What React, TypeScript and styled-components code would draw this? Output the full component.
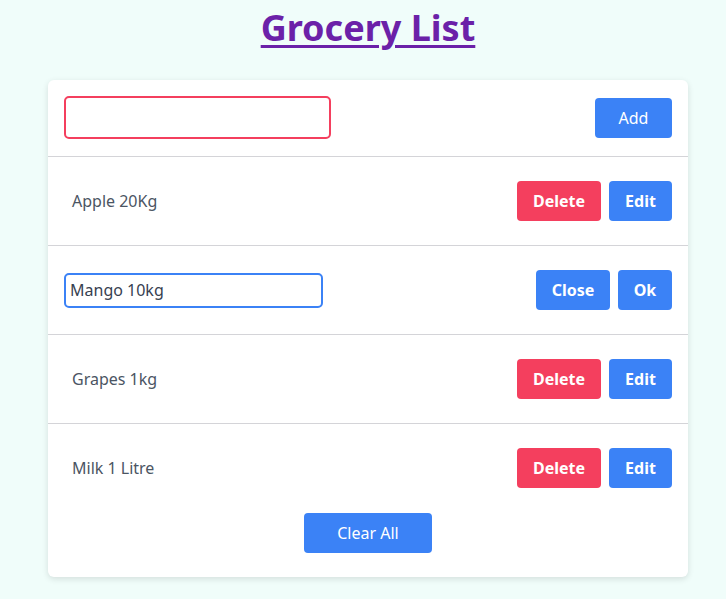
import React from "react";
import styled, { createGlobalStyle } from "styled-components";

const Global = createGlobalStyle`
  html, body { margin: 0; padding: 0; background: #f0fdfa; }
  body { font-family: "Noto Sans", "Open Sans", sans-serif; }
  * { box-sizing: border-box; }
`;

const Page = styled.main`
  display: flex;
  flex-direction: column;
  align-items: center;
  padding: 0 0 22px 10px;
  min-height: 599px;
`;

const Title = styled.h1`
  margin: 4px 0 28px;
  font-size: 36px;
  line-height: 48px;
  font-weight: 700;
  color: #6b21a8;
  text-decoration: underline;
  text-decoration-thickness: 3px;
  text-underline-offset: 4px;
`;

const Card = styled.section`
  width: 640px;
  background: #fff;
  border-radius: 6px;
  box-shadow: 0 2px 6px rgba(0, 0, 0, 0.12);
  display: flex;
  flex-direction: column;
  padding-bottom: 24px;
`;

const Row = styled.div<{ $pad: number; $last?: boolean }>`
  display: flex;
  align-items: center;
  justify-content: space-between;
  padding: ${(p) => p.$pad}px 16px;
  border-bottom: ${(p) => (p.$last ? "none" : "1px solid #d4d4d8")};
`;

const TopRow = styled(Row)`
  padding-bottom: 17px;
`;

const TextInput = styled.input<{ $w: number; $h: number; $color: string }>`
  width: ${(p) => p.$w}px;
  height: ${(p) => p.$h}px;
  border: 2px solid ${(p) => p.$color};
  border-radius: 5px;
  font-family: inherit;
  font-size: 16px;
  color: #374151;
  padding: 0 4px;
  outline: none;
`;

const ItemText = styled.span`
  padding-left: 8px;
  font-size: 16px;
  color: #4b5563;
`;

const Actions = styled.div`
  display: flex;
  gap: 8px;
`;

const Button = styled.button<{ $variant?: "red" | "blue"; $w: number; $bold?: boolean }>`
  width: ${(p) => p.$w}px;
  height: 40px;
  border: none;
  border-radius: 4px;
  background: ${(p) => (p.$variant === "red" ? "#f43f5e" : "#3b82f6")};
  color: #fff;
  font-family: inherit;
  font-size: 16px;
  font-weight: ${(p) => (p.$bold ? 700 : 400)};
  cursor: pointer;
`;

const Footer = styled.div`
  display: flex;
  justify-content: center;
  padding-top: 1px;
`;

const items = [
  { name: "Apple 20Kg", editing: false },
  { name: "Mango 10kg", editing: true },
  { name: "Grapes 1kg", editing: false },
  { name: "Milk 1 Litre", editing: false },
];

export default function App() {
  return (
    <>
      <Global />
      <Page>
        <Title>Grocery List</Title>
        <Card>
          <TopRow $pad={16}>
            <TextInput $w={267} $h={43} $color="#f43f5e" />
            <Button $w={77}>Add</Button>
          </TopRow>
          {items.map((it, i) => (
            <Row key={it.name} $pad={24} $last={i === items.length - 1}>
              {it.editing ? (
                <TextInput $w={259} $h={35} $color="#3b82f6" defaultValue={it.name} />
              ) : (
                <ItemText>{it.name}</ItemText>
              )}
              <Actions>
                {it.editing ? (
                  <>
                    <Button $w={74} $bold>Close</Button>
                    <Button $w={54} $bold>Ok</Button>
                  </>
                ) : (
                  <>
                    <Button $variant="red" $w={84} $bold>Delete</Button>
                    <Button $w={63} $bold>Edit</Button>
                  </>
                )}
              </Actions>
            </Row>
          ))}
          <Footer>
            <Button $w={128}>Clear All</Button>
          </Footer>
        </Card>
      </Page>
    </>
  );
}
